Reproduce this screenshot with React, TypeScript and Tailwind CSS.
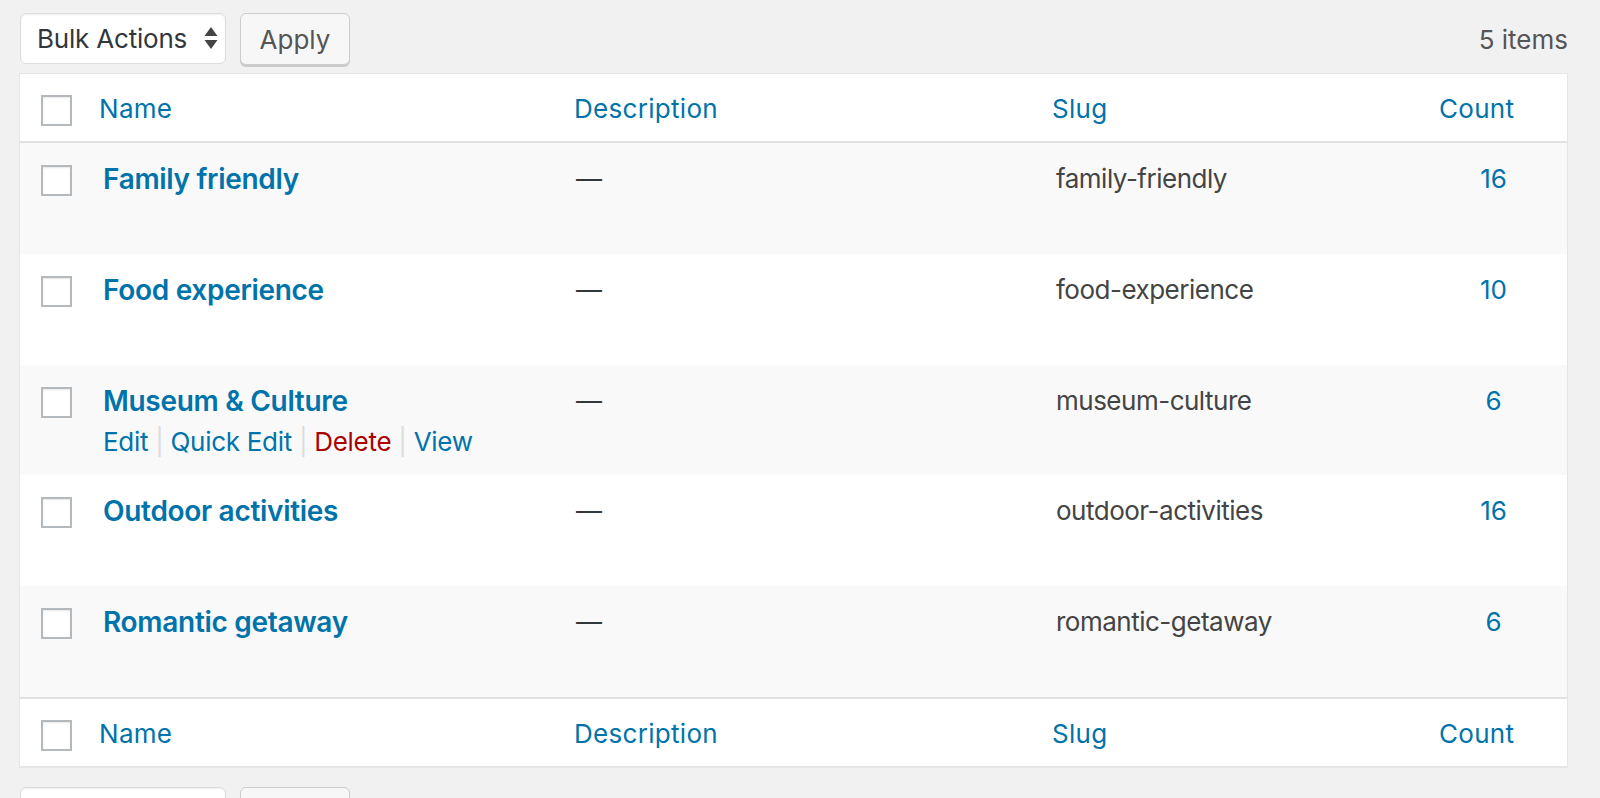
const rows = [
  { name: 'Family friendly', slug: 'family-friendly', count: 16 },
  { name: 'Food experience', slug: 'food-experience', count: 10 },
  { name: 'Museum & Culture', slug: 'museum-culture', count: 6, hover: true },
  { name: 'Outdoor activities', slug: 'outdoor-activities', count: 16 },
  { name: 'Romantic getaway', slug: 'romantic-getaway', count: 6 },
];

function Checkbox() {
  return (
    <span className="block w-[31px] h-[31px] border-2 border-[#b4b9be] bg-white shadow-[inset_0_1px_2px_rgba(0,0,0,0.1)]" />
  );
}

function Toolbar() {
  return (
    <div className="flex items-start gap-[14px] h-[52px]">
      <div className="flex items-center w-[206px] h-[51px] pl-[16px] pr-[7px] bg-white border border-[#ddd] rounded-[6px] shadow-[inset_0_1px_2px_rgba(0,0,0,0.07)] text-[26px] text-[#32373c]">
        <span className="flex-1 tracking-[-0.2px]">Bulk Actions</span>
        <svg width="14" height="23" viewBox="0 0 14 23" className="fill-[#444]">
          <path d="M7 0 L13.5 9 L0.5 9 Z" />
          <path d="M0.5 13 L13.5 13 L7 22 Z" />
        </svg>
      </div>
      <button className="h-[52px] w-[110px] bg-[#f7f7f7] border border-[#ccc] rounded-[6px] shadow-[0_2px_0_#ccc] text-[26px] text-[#555]">
        Apply
      </button>
    </div>
  );
}

function HeadRow({ top }: { top?: boolean }) {
  return (
    <div
      className={
        'flex h-[69px] bg-white tracking-[0.3px] ' +
        (top ? 'border-b-2 border-[#e1e1e1]' : 'border-t-2 border-[#e1e1e1]')
      }
    >
      <div className="w-[63px] pl-[21px] pt-[21px]">
        <Checkbox />
      </div>
      <div className="w-[472px] pl-[16px] pt-[17px] leading-[36px] text-[#0073aa]">Name</div>
      <div className="w-[478px] pl-[19px] pt-[17px] leading-[36px] text-[#0073aa]">Description</div>
      <div className="w-[387px] pl-[19px] pt-[17px] leading-[36px] text-[#0073aa]">Slug</div>
      <div className="flex-1 pl-[19px] pt-[17px] leading-[36px] text-[#0073aa]">Count</div>
    </div>
  );
}

export default function App() {
  return (
    <div className="min-h-screen bg-[#f1f1f1] pt-[13px] font-['Inter',sans-serif] overflow-hidden">
      <div className="flex items-start pl-[20px] pr-[32px]">
        <Toolbar />
        <div className="ml-auto pt-[9px] text-[26px] leading-[36px] text-[#555]">5 items</div>
      </div>

      <div className="ml-[19px] mr-[32px] mt-[8px] border border-[#e5e5e5] bg-white shadow-[0_1px_1px_rgba(0,0,0,0.04)] text-[26px]">
        <HeadRow top />

        {rows.map((r, i) => (
          <div key={r.slug} className={'flex h-[110.8px] ' + (i % 2 === 0 ? 'bg-[#f9f9f9]' : 'bg-white')}>
            <div className="w-[63px] pl-[21px] pt-[22px]">
              <Checkbox />
            </div>
            <div className="w-[472px] pl-[20px] pt-[18px]">
              <div className="text-[28px] leading-[36px] font-semibold tracking-[-0.3px] text-[#0073aa]">{r.name}</div>
              <div className={'pt-[6px] leading-[34px] tracking-[-0.3px] ' + (r.hover ? '' : 'invisible')}>
                <span className="text-[#0073aa]">Edit</span>
                <span className="text-[#ddd]"> | </span>
                <span className="text-[#0073aa]">Quick Edit</span>
                <span className="text-[#ddd]"> | </span>
                <span className="text-[#a00]">Delete</span>
                <span className="text-[#ddd]"> | </span>
                <span className="text-[#0073aa]">View</span>
              </div>
            </div>
            <div className="w-[478px] pl-[21px] pt-[18px] leading-[36px] text-[#32373c]">—</div>
            <div className="w-[387px] pl-[23px] pt-[18px] leading-[36px] tracking-[-0.5px] text-[#444]">{r.slug}</div>
            <div className="flex-1 pt-[18px] leading-[36px] text-center text-[#0073aa]">{r.count}</div>
          </div>
        ))}

        <HeadRow />
      </div>

      <div className="pl-[20px] pt-[20px]">
        <Toolbar />
      </div>
    </div>
  );
}
